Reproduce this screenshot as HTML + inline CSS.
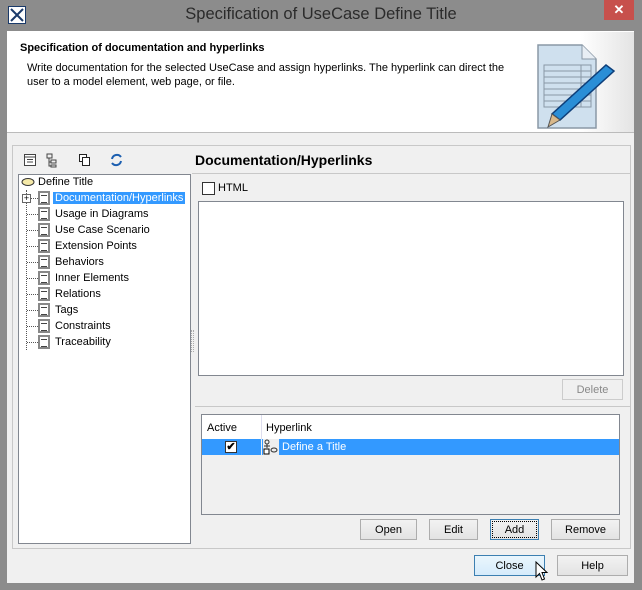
<!DOCTYPE html>
<html><head><style>
*{box-sizing:border-box;margin:0;padding:0}
body{width:642px;height:590px;background:#8c8c8c;font-family:"Liberation Sans",sans-serif;font-size:11px;color:#000;position:relative;overflow:hidden}
.a{position:absolute}
.btn{position:absolute;border:1px solid #adadad;background:linear-gradient(#f2f2f2,#e3e3e3);text-align:center;font-size:11px;line-height:20px}
.tree div{position:absolute;left:0;height:16px;line-height:16px;white-space:nowrap}
.ic{display:inline-block;width:12px;height:14px;border:2px solid #888;background:#fff;vertical-align:middle;margin-right:3px;position:relative}
.ic:after{content:"";position:absolute;left:1px;top:2px;width:6px;height:6px;border-top:1px solid #444;border-bottom:1px solid #444}
</style></head><body>
<div class="a" style="left:0;top:0;width:642px;height:32px;background:#8c8c8c"></div>
<svg class="a" style="left:8px;top:6px" width="18" height="18"><rect x="0.5" y="0.5" width="17" height="17" fill="#fff" stroke="#1a3a6a"/><path d="M3 3 L15 15 M15 3 L3 15" stroke="#1a3a6a" stroke-width="2"/></svg>
<div class="a" style="left:0;top:5px;width:642px;text-align:center;font-size:16.5px;color:#2b2b2b">Specification of UseCase Define Title</div>
<div class="a" style="left:604px;top:0;width:30px;height:20px;background:#c7504c;color:#fff;text-align:center;font-size:13px;line-height:20px;font-weight:bold">✕</div>
<div class="a" style="left:7px;top:31px;width:627px;height:552px;background:#f0f0f0"></div>
<div class="a" style="left:7px;top:31px;width:627px;height:102px;background:#fff;border-bottom:1px solid #bbb"></div>
<div class="a" style="left:580px;top:32px;width:54px;height:100px;background:linear-gradient(90deg,#fff,#e4e4e4)"></div>
<div class="a" style="left:20px;top:42px;font-weight:bold;font-size:11px">Specification of documentation and hyperlinks</div>
<div class="a" style="left:27px;top:61px;line-height:14px;width:490px">Write documentation for the selected UseCase and assign hyperlinks. The hyperlink can direct the user to a model element, web page, or file.</div>
<svg class="a" style="left:536px;top:40px" width="80" height="90">
<path d="M2 5 H46 L60 19 V88 H2 Z" fill="#cfe0ee" stroke="#8a98a6" stroke-width="1.5"/>
<path d="M46 5 V19 H60" fill="#e8eef4" stroke="#8a98a6"/>
<g stroke="#8a98a6"><path d="M8 25H55M8 31H55M8 37H55M8 43H55M8 49H55M8 55H55M8 61H55M8 67H55M45 25V67"/><rect x="8" y="25" width="47" height="42" fill="none"/></g>
<path d="M70 25 L78 31 L24 80 L16 74 Z" fill="#2a8ed6" stroke="#0e3f7a" stroke-width="1.5"/>
<path d="M16 74 L24 80 L12 87 Z" fill="#d8b88a" stroke="#555"/>
</svg>
<div class="a" style="left:12px;top:145px;width:619px;height:404px;border:1px solid #c8c8c8"></div>
<svg class="a" style="left:22px;top:152px" width="110" height="16">
<rect x="2.5" y="2.5" width="11" height="11" fill="#fff" stroke="#444"/><path d="M3 5H13M5 7.5H11M5 10H11" stroke="#444"/>
<path d="M25 2h5v4h-5zM29 8h5v3h-5zM29 13h5v2h-5zM27 6v8h2M27 10h2" fill="none" stroke="#444"/>
<rect x="57.5" y="2.5" width="7" height="7" fill="#fff" stroke="#222"/><rect x="60.5" y="5.5" width="7" height="8" fill="#fff" stroke="#222"/>
<path d="M90 7a5 5 0 0 1 9-2M99 9a5 5 0 0 1-9 2" fill="none" stroke="#1c5fb0" stroke-width="2"/>
</svg>
<div class="a" style="left:18px;top:174px;width:173px;height:370px;background:#fff;border:1px solid #828790"></div>
<div class="a" style="left:191px;top:330px;width:3px;height:22px;border-left:1px dotted #aaa;border-right:1px dotted #aaa"></div>
<div class="a tree" style="left:20px;top:174px">
<div style="top:0;left:1px"><svg width="14" height="10" style="vertical-align:middle"><ellipse cx="7" cy="5" rx="6" ry="3.5" fill="#f5e9a8" stroke="#333"/></svg> Define Title</div>
<div class="a" style="left:6px;top:16px;width:1px;height:160px;border-left:1px dotted #555"></div>
<div style="top:16px;left:2px"><span style="display:inline-block;width:9px;height:9px;border:1px solid #666;font-size:9px;line-height:7px;text-align:center;background:#fff;vertical-align:middle">+</span><span style="display:inline-block;width:7px;border-top:1px dotted #555;vertical-align:middle"></span><span class="ic"></span><span style="background:#3399ff;color:#fff;padding:0 2px">Documentation/Hyperlinks</span></div>
<div style="top:32px;left:7px"><span style="display:inline-block;width:11px;border-top:1px dotted #555;vertical-align:middle"></span><span class="ic"></span><span style="padding:0 2px">Usage in Diagrams</span></div>
<div style="top:48px;left:7px"><span style="display:inline-block;width:11px;border-top:1px dotted #555;vertical-align:middle"></span><span class="ic"></span><span style="padding:0 2px">Use Case Scenario</span></div>
<div style="top:64px;left:7px"><span style="display:inline-block;width:11px;border-top:1px dotted #555;vertical-align:middle"></span><span class="ic"></span><span style="padding:0 2px">Extension Points</span></div>
<div style="top:80px;left:7px"><span style="display:inline-block;width:11px;border-top:1px dotted #555;vertical-align:middle"></span><span class="ic"></span><span style="padding:0 2px">Behaviors</span></div>
<div style="top:96px;left:7px"><span style="display:inline-block;width:11px;border-top:1px dotted #555;vertical-align:middle"></span><span class="ic"></span><span style="padding:0 2px">Inner Elements</span></div>
<div style="top:112px;left:7px"><span style="display:inline-block;width:11px;border-top:1px dotted #555;vertical-align:middle"></span><span class="ic"></span><span style="padding:0 2px">Relations</span></div>
<div style="top:128px;left:7px"><span style="display:inline-block;width:11px;border-top:1px dotted #555;vertical-align:middle"></span><span class="ic"></span><span style="padding:0 2px">Tags</span></div>
<div style="top:144px;left:7px"><span style="display:inline-block;width:11px;border-top:1px dotted #555;vertical-align:middle"></span><span class="ic"></span><span style="padding:0 2px">Constraints</span></div>
<div style="top:160px;left:7px"><span style="display:inline-block;width:11px;border-top:1px dotted #555;vertical-align:middle"></span><span class="ic"></span><span style="padding:0 2px">Traceability</span></div>
</div>
<div class="a" style="left:195px;top:152px;font-size:14px;font-weight:bold">Documentation/Hyperlinks</div>
<div class="a" style="left:192px;top:173px;width:438px;height:1px;background:#c8c8c8"></div>
<div class="a" style="left:202px;top:182px;width:13px;height:13px;border:1px solid #333;background:#fff"></div>
<div class="a" style="left:218px;top:182px">HTML</div>
<div class="a" style="left:198px;top:201px;width:426px;height:175px;background:#fff;border:1px solid #828790"></div>
<div class="btn" style="left:562px;top:379px;width:61px;height:21px;color:#888;background:#f0f0f0;border-color:#ccc">Delete</div>
<div class="a" style="left:195px;top:406px;width:435px;height:1px;background:#c8c8c8"></div>
<div class="a" style="left:201px;top:414px;width:419px;height:101px;border:1px solid #828790;background:#f0f0f0"></div>
<div class="a" style="left:202px;top:415px;width:417px;height:24px;background:#fff"></div>
<div class="a" style="left:261px;top:415px;width:1px;height:39px;background:#dde"></div>
<div class="a" style="left:207px;top:422px">Active</div>
<div class="a" style="left:266px;top:422px">Hyperlink</div>
<div class="a" style="left:202px;top:439px;width:417px;height:16px;background:#3399ff"></div>
<div class="a" style="left:261px;top:439px;width:1px;height:16px;background:#f0f0f0"></div>
<div class="a" style="left:225px;top:441px;width:12px;height:12px;background:#fff;border:1px solid #333;font-size:11px;line-height:10px;text-align:center;font-weight:bold">✔</div>
<svg class="a" style="left:263px;top:439px" width="16" height="16"><rect x="0" y="0" width="16" height="16" fill="#eee"/><circle cx="4" cy="3" r="2" fill="none" stroke="#333"/><path d="M4 5v4M1 7h6" stroke="#333"/><ellipse cx="11" cy="11" rx="3" ry="2" fill="none" stroke="#333"/><rect x="1" y="10" width="5" height="5" fill="#fff" stroke="#000"/></svg>
<div class="a" style="left:282px;top:441px;color:#fff">Define a Title</div>
<div class="btn" style="left:360px;top:519px;width:57px;height:21px">Open</div>
<div class="btn" style="left:429px;top:519px;width:49px;height:21px">Edit</div>
<div class="btn" style="left:490px;top:519px;width:49px;height:21px;border-color:#3c7fb1;outline:1px dotted #000;outline-offset:-3px">Add</div>
<div class="btn" style="left:551px;top:519px;width:69px;height:21px">Remove</div>
<div class="btn" style="left:474px;top:555px;width:71px;height:21px;border-color:#3c7fb1;background:linear-gradient(#eaf6fd,#d5ebfb)">Close</div>
<div class="btn" style="left:557px;top:555px;width:71px;height:21px">Help</div>
<svg class="a" style="left:535px;top:561px" width="14" height="22"><path d="M1 1 L1 16 L4.5 12.5 L7 19 L9.5 18 L7 11.5 L12 11.5 Z" fill="#fff" stroke="#000"/></svg>
</body></html>
